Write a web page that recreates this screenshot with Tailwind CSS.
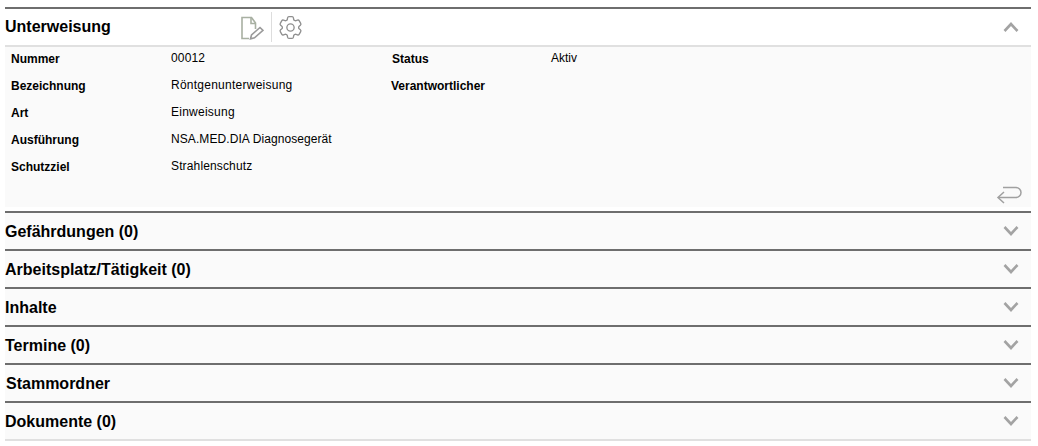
<!DOCTYPE html>
<html lang="de">
<head>
    <meta charset="UTF-8">
    <title>Unterweisung</title>
    <script src="https://cdn.jsdelivr.net/npm/@tailwindcss/browser@4"></script>
</head>
<body class="bg-white h-[446px] overflow-hidden font-['Liberation_Sans',Arial,sans-serif] text-black">
    <div class="ml-[5px] w-[1026px] pt-[7px]">
        <!-- Unterweisung, open -->
        <div class="border-t-2 border-[#6e6e6e] h-[38px] flex items-center bg-white">
            <h2 class="text-base font-bold w-[234px]">Unterweisung</h2>
            <svg class="w-6 h-6 ml-[1px] mt-[1px]" viewBox="0 0 24 24" fill="none" stroke="#a8b0a2" stroke-width="1.600">
                <path d="M9 22.500H2V1.500h9.500l4 5.500v6"/>
                <path d="M11 1.500v6h4.500"/>
                <path d="M10.500 22.800l1-3.800 8.500-7.500 3 2.800-8.500 7.500z" stroke="#9a9a9a"/>
            </svg>
            <div class="w-px h-[30px] bg-[#dddddd] ml-[7px]"></div>
            <svg class="w-[29px] h-[29px] ml-[4px]" viewBox="0 0 24 24" fill="none" stroke="#8f8f8f" stroke-width="1.100">
                <path d="M9.594 3.940c.09-.542.56-.94 1.110-.94h2.593c.55 0 1.020.398 1.110.94l.213 1.281c.063.374.313.686.645.870.074.040.147.083.22.127.325.196.72.257 1.075.124l1.217-.456a1.125 1.125 0 0 1 1.370.49l1.296 2.247a1.125 1.125 0 0 1-.26 1.431l-1.003.827c-.293.241-.438.613-.43.992a7.723 7.723 0 0 1 0 .255c-.008.378.137.75.43.991l1.004.827c.424.35.534.955.26 1.430l-1.298 2.247a1.125 1.125 0 0 1-1.369.491l-1.217-.456c-.355-.133-.75-.072-1.076.124a6.470 6.470 0 0 1-.22.128c-.331.183-.581.495-.644.869l-.213 1.281c-.09.543-.56.94-1.110.94h-2.594c-.55 0-1.019-.398-1.110-.94l-.213-1.281c-.062-.374-.312-.686-.644-.87a6.520 6.520 0 0 1-.22-.127c-.325-.196-.72-.257-1.076-.124l-1.217.456a1.125 1.125 0 0 1-1.369-.49l-1.297-2.247a1.125 1.125 0 0 1 .26-1.431l1.004-.827c.292-.24.437-.613.43-.991a6.932 6.932 0 0 1 0-.255c.007-.38-.138-.751-.43-.992l-1.004-.827a1.125 1.125 0 0 1-.26-1.430l1.297-2.247a1.125 1.125 0 0 1 1.370-.491l1.216.456c.356.133.751.072 1.076-.124.072-.044.146-.086.22-.128.332-.183.582-.495.644-.869l.214-1.280Z"/>
                <circle cx="12" cy="12" r="3"/>
            </svg>
            <svg class="w-4 h-3 ml-auto mr-[12px]" viewBox="0 0 16 12" fill="none" stroke="#a3a3a3" stroke-width="2.600">
                <path d="M1.500 10L8 3l6.500 7"/>
            </svg>
        </div>
        <div class="border-t-2 border-[#e0e0e0] bg-[#fafafa] h-[162px] relative text-xs">
            <div class="grid grid-cols-[160px_221px_159px_1fr] auto-rows-[27px] pl-[6px] pt-[3px]">
                <div class="font-bold pt-[1px]">Nummer</div>
                <div class="tracking-[0.15px]">00012</div>
                <div class="font-bold pt-[1px]">Status</div>
                <div>Aktiv</div>
                <div class="font-bold pt-[1px]">Bezeichnung</div>
                <div class="tracking-[0.25px]">Röntgenunterweisung</div>
                <div class="font-bold pt-[1px] col-span-2 -ml-[1px]">Verantwortlicher</div>
                <div class="font-bold pt-[1px] col-start-1">Art</div>
                <div class="tracking-[0.25px]">Einweisung</div>
                <div class="font-bold pt-[1px] col-start-1">Ausführung</div>
                <div class="tracking-[0.08px]">NSA.MED.DIA Diagnosegerät</div>
                <div class="font-bold pt-[1px] col-start-1">Schutzziel</div>
                <div class="tracking-[0.14px]">Strahlenschutz</div>
            </div>
            <!-- back arrow sits over the panel corner -->
            <svg class="absolute right-[9px] bottom-[3px] w-[26px] h-[18px]" viewBox="0 0 26 18" fill="none" stroke="#a0a0a0" stroke-width="1.500">
                <path d="M7 1.500h13a4.500 4.500 0 0 1 0 10H2"/>
                <path d="M8 6l-6 5.500 6 5.500"/>
            </svg>
        </div>
        <div class="h-[4px]"></div>
        <!-- closed sections -->
        <div class="border-t-2 border-[#6e6e6e] h-[38px] flex items-center justify-between bg-[#fafafa]">
            <h2 class="text-base font-bold mt-[2px]">Gefährdungen (0)</h2>
            <svg class="w-4 h-3 mr-[12px]" viewBox="0 0 16 12" fill="none" stroke="#a3a3a3" stroke-width="2.600"><path d="M1.500 2L8 9l6.500-7"/></svg>
        </div>
        <div class="border-t-2 border-[#6e6e6e] h-[38px] flex items-center justify-between bg-[#fafafa]">
            <h2 class="text-base font-bold mt-[2px]">Arbeitsplatz/Tätigkeit (0)</h2>
            <svg class="w-4 h-3 mr-[12px]" viewBox="0 0 16 12" fill="none" stroke="#a3a3a3" stroke-width="2.600"><path d="M1.500 2L8 9l6.500-7"/></svg>
        </div>
        <div class="border-t-2 border-[#6e6e6e] h-[38px] flex items-center justify-between bg-[#fafafa]">
            <h2 class="text-base font-bold mt-[2px]">Inhalte</h2>
            <svg class="w-4 h-3 mr-[12px]" viewBox="0 0 16 12" fill="none" stroke="#a3a3a3" stroke-width="2.600"><path d="M1.500 2L8 9l6.500-7"/></svg>
        </div>
        <div class="border-t-2 border-[#6e6e6e] h-[38px] flex items-center justify-between bg-[#fafafa]">
            <h2 class="text-base font-bold mt-[2px]">Termine (0)</h2>
            <svg class="w-4 h-3 mr-[12px]" viewBox="0 0 16 12" fill="none" stroke="#a3a3a3" stroke-width="2.600"><path d="M1.500 2L8 9l6.500-7"/></svg>
        </div>
        <div class="border-t-2 border-[#6e6e6e] h-[38px] flex items-center justify-between bg-[#fafafa]">
            <h2 class="text-base font-bold mt-[2px] pl-[1px]">Stammordner</h2>
            <svg class="w-4 h-3 mr-[12px]" viewBox="0 0 16 12" fill="none" stroke="#a3a3a3" stroke-width="2.600"><path d="M1.500 2L8 9l6.500-7"/></svg>
        </div>
        <div class="border-t-2 border-[#6e6e6e] border-b-2 border-b-[#e0e0e0] h-[40px] flex items-center justify-between bg-[#fafafa]">
            <h2 class="text-base font-bold mt-[2px]">Dokumente (0)</h2>
            <svg class="w-4 h-3 mr-[12px]" viewBox="0 0 16 12" fill="none" stroke="#a3a3a3" stroke-width="2.600"><path d="M1.500 2L8 9l6.500-7"/></svg>
        </div>
    </div>
</body>
</html>
